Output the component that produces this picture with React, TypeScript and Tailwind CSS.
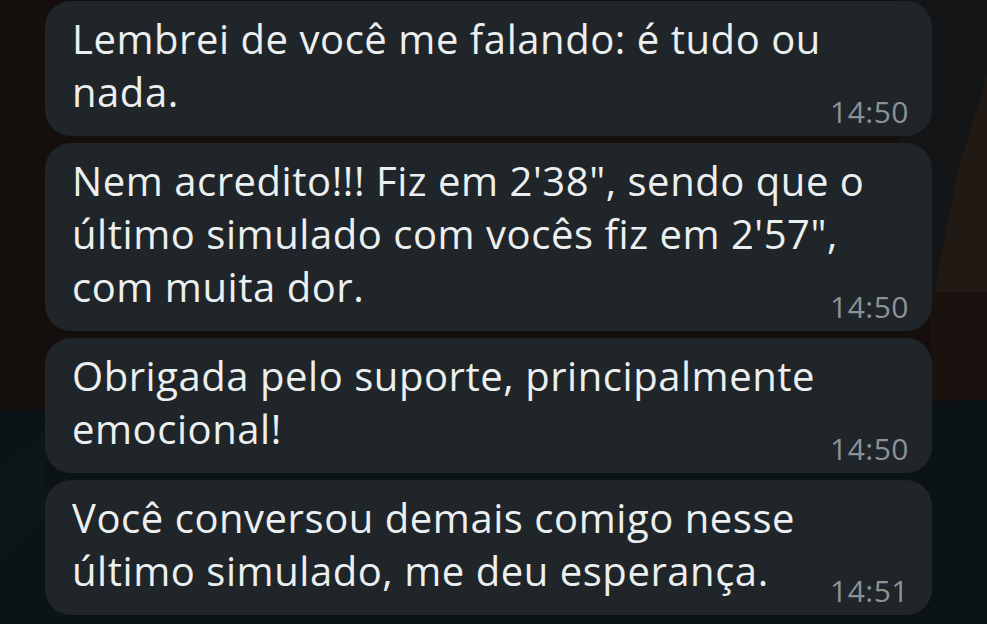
import React from "react";

type Msg = { lines: string[]; time: string };

const messages: Msg[] = [
  { lines: ["Lembrei de você me falando: é tudo ou", "nada."], time: "14:50" },
  {
    lines: [
      "Nem acredito!!! Fiz em 2'38\", sendo que o",
      "último simulado com vocês fiz em 2'57\",",
      "com muita dor.",
    ],
    time: "14:50",
  },
  { lines: ["Obrigada pelo suporte, principalmente", "emocional!"], time: "14:50" },
  {
    lines: ["Você conversou demais comigo nesse", "último simulado, me deu esperança."],
    time: "14:51",
  },
];

function Wallpaper() {
  return (
    <svg
      className="absolute inset-0 h-full w-full"
      viewBox="0 0 987 624"
      preserveAspectRatio="none"
    >
      <rect x="0" y="0" width="987" height="624" fill="#0c1316" />
      <rect x="0" y="0" width="987" height="410" fill="#140f0d" />
      <rect x="900" y="0" width="87" height="300" fill="#131516" />
      <polygon points="987,75 987,292 934,292 958,170" fill="#211a14" />
      <polygon points="930,292 987,292 987,400 930,405" fill="#19120e" />
      <polygon points="0,410 987,400 987,624 0,624" fill="#0c1316" />
      <polygon points="0,470 45,430 45,520 0,560" fill="#0f1719" opacity="0.6" />
    </svg>
  );
}

function Bubble({ m }: { m: Msg }) {
  return (
    <div className="rounded-[26px] bg-[#1f2528] pl-[27px] pr-[23px] pt-[11px] pb-[6px]">
      <div className="text-[40px] leading-[53px] text-[#eceff0] tracking-[0.55px]">
        {m.lines.map((l, i) => (
          <div key={i} className="whitespace-pre">
            {l}
          </div>
        ))}
      </div>
      <div className="-mt-[24px] flex justify-end">
        <span className="text-[30px] leading-[36px] text-[#8d9295] tracking-[0.5px]">
          {m.time}
        </span>
      </div>
    </div>
  );
}

export default function App() {
  return (
    <div
      className="relative h-[624px] w-[987px] overflow-hidden"
      style={{ fontFamily: '"Open Sans", "Noto Sans", sans-serif' }}
    >
      <Wallpaper />
      <div className="relative flex flex-col gap-[7px] pl-[45px] pr-[55px] pt-px">
        {messages.map((m, i) => (
          <Bubble key={i} m={m} />
        ))}
      </div>
    </div>
  );
}
